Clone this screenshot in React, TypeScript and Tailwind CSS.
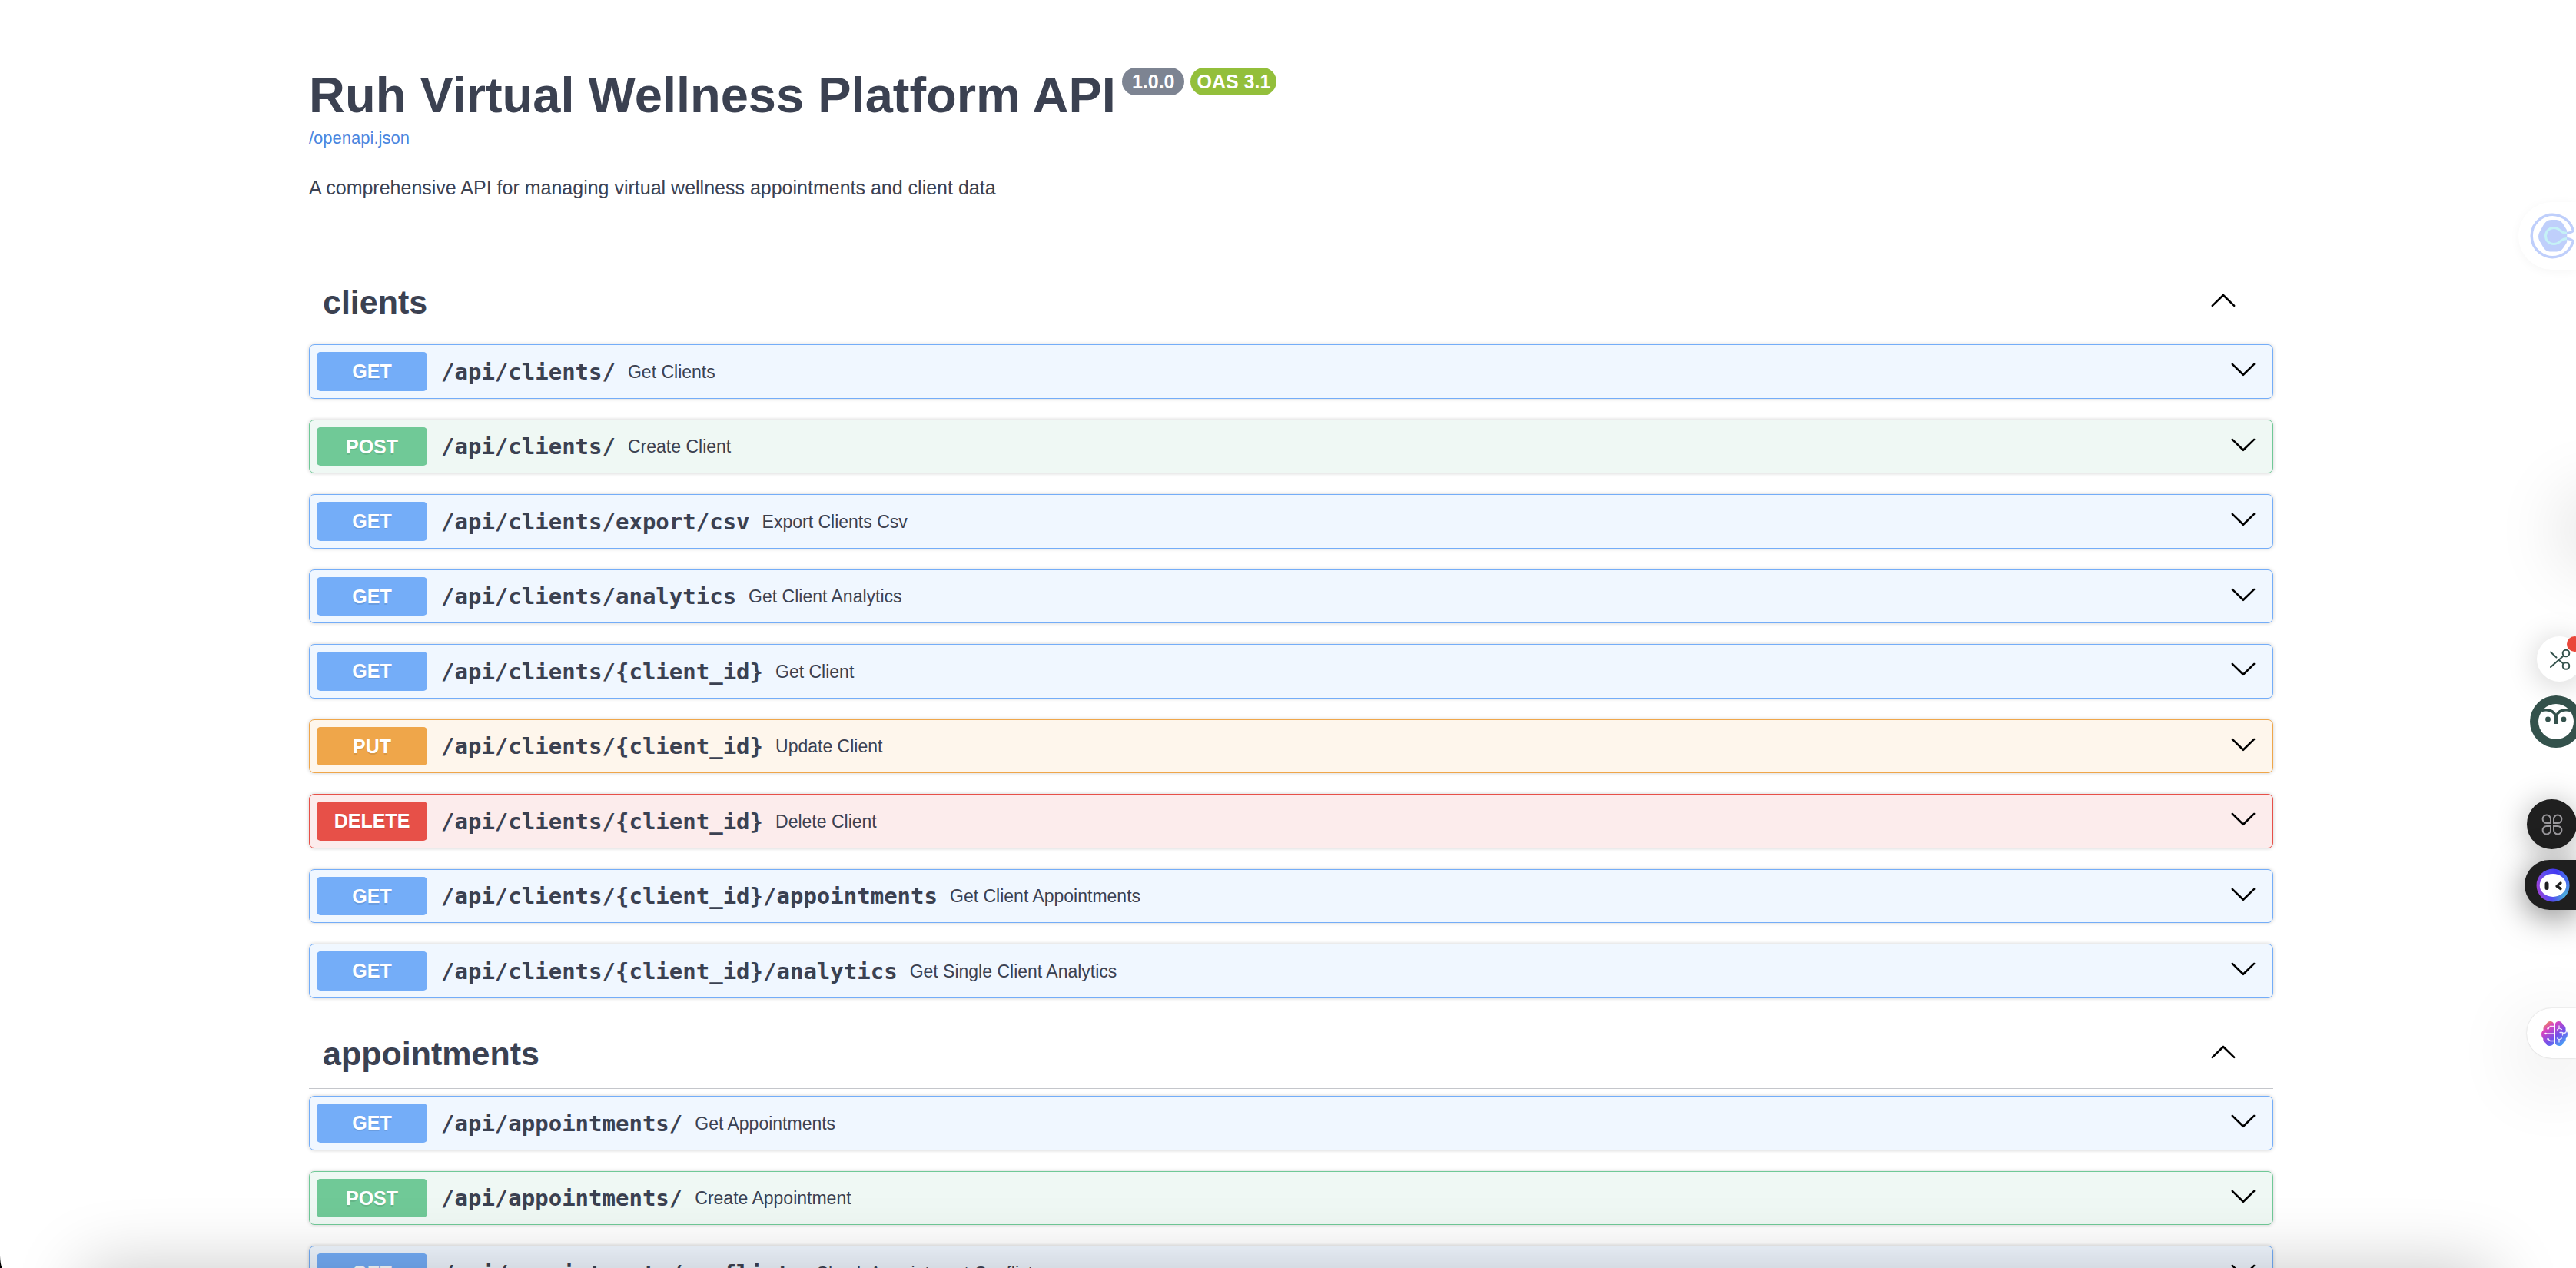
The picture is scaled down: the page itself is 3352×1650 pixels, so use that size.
type Method = "GET" | "POST" | "PUT" | "DELETE";

interface Endpoint {
  method: Method;
  path: string;
  summary: string;
}

const rowStyles: Record<Method, string> = {
  GET: "border-[#74adf8] bg-[#f0f7ff]",
  POST: "border-[#70c997] bg-[#eff8f4]",
  PUT: "border-[#efa64a] bg-[#fef6ec]",
  DELETE: "border-[#e75048] bg-[#fcecec]",
};

const badgeStyles: Record<Method, string> = {
  GET: "bg-[#74adf8]",
  POST: "bg-[#70c997]",
  PUT: "bg-[#efa64a]",
  DELETE: "bg-[#e75048]",
};

const groups: { name: string; endpoints: Endpoint[] }[] = [
  {
    name: "clients",
    endpoints: [
      { method: "GET", path: "/api/clients/", summary: "Get Clients" },
      { method: "POST", path: "/api/clients/", summary: "Create Client" },
      { method: "GET", path: "/api/clients/export/csv", summary: "Export Clients Csv" },
      { method: "GET", path: "/api/clients/analytics", summary: "Get Client Analytics" },
      { method: "GET", path: "/api/clients/{client_id}", summary: "Get Client" },
      { method: "PUT", path: "/api/clients/{client_id}", summary: "Update Client" },
      { method: "DELETE", path: "/api/clients/{client_id}", summary: "Delete Client" },
      { method: "GET", path: "/api/clients/{client_id}/appointments", summary: "Get Client Appointments" },
      { method: "GET", path: "/api/clients/{client_id}/analytics", summary: "Get Single Client Analytics" },
    ],
  },
  {
    name: "appointments",
    endpoints: [
      { method: "GET", path: "/api/appointments/", summary: "Get Appointments" },
      { method: "POST", path: "/api/appointments/", summary: "Create Appointment" },
      { method: "GET", path: "/api/appointments/conflicts", summary: "Check Appointment Conflicts" },
    ],
  },
];

function ArrowUp() {
  return (
    <svg viewBox="0 0 20 20" className="size-9" aria-hidden="true">
      <path d="M 17.418 14.908 C 17.69 15.176 18.127 15.176 18.397 14.908 C 18.667 14.64 18.668 14.207 18.397 13.939 L 10.489 6.109 C 10.219 5.841 9.782 5.841 9.51 6.109 L 1.602 13.939 C 1.332 14.207 1.332 14.64 1.602 14.908 C 1.873 15.176 2.311 15.176 2.581 14.908 L 10 7.767 L 17.418 14.908 Z" />
    </svg>
  );
}

function ArrowDown() {
  return (
    <svg viewBox="0 0 20 20" className="size-9" aria-hidden="true">
      <path d="M17.418 6.109c.272-.268.709-.268.979 0s.271.701 0 .969l-7.908 7.83c-.27.268-.707.268-.979 0l-7.908-7.83c-.27-.268-.271-.701 0-.969s.709-.268.979 0L10 13.25l7.418-7.141z" />
    </svg>
  );
}

function EndpointRow({ method, path, summary }: Endpoint) {
  return (
    <div className={`flex items-center rounded-[7px] border py-[9px] pr-5 pl-[9px] shadow-[0_0_5px_rgba(0,0,0,0.19)] ${rowStyles[method]}`}>
      <button type="button" className="flex flex-1 items-center text-left">
        <span
          className={`w-36 rounded-[5px] pt-[7px] pb-[6px] text-center text-[25px] leading-normal font-bold text-white [text-shadow:0_2px_0_rgba(0,0,0,0.1)] ${badgeStyles[method]}`}
        >
          {method}
        </span>
        <span className="pt-0.5 pr-4 pl-[18px] font-['DejaVu_Sans_Mono',monospace] text-[29px] leading-none font-bold">{path}</span>
        <span className="pt-0.5 text-[23px] leading-none">{summary}</span>
      </button>
      <button type="button" aria-label={`Expand ${method} ${path}`} className="pb-1.5">
        <ArrowDown />
      </button>
    </div>
  );
}

function CalendarIcon() {
  return (
    <svg viewBox="0 0 60 60" className="size-[60px] shrink-0" fill="none" aria-hidden="true">
      <path d="M28 9h5c5 0 8 2 10.500 6l4 6.500c.5 1 .8 2 .8 3.500v11c0 1.500-.3 2.500-.8 3.500l-4 6c-2.500 4-5.500 5-10.500 5h-5c-5 0-8-1.500-10.500-5.500l-5-8.500c-2-3.500-2-8 0-11.500l5-9c2.500-4 5.500-7 10.500-7Z" fill="#bfcffb" />
      <path d="M56 22A27.500 27.500 0 1 0 56 38" stroke="#bfcffb" strokeWidth="3.500" />
      <path d="M49 26.500c-4 0-6-.5-9-3-3-3-5.500-4-9-4-6 0-10.500 4.500-10.500 10.500S25 40.500 31 40.500c3.500 0 6-1 9-4 3-2.500 5-3 9-3" stroke="#c5f1f6" strokeWidth="3" />
      <path d="M48 26.500c3 0 6-1 9.500-4M48 33.500c3 0 6 1 9.500 4" stroke="#bfcffb" strokeWidth="3" />
    </svg>
  );
}

function ScissorsIcon() {
  return (
    <svg viewBox="0 0 30 30" className="size-[30px]" fill="none" stroke="#34524c" strokeWidth="2" strokeLinecap="round" aria-hidden="true">
      <circle cx="23" cy="7" r="4.300" />
      <circle cx="23" cy="23.500" r="4.300" />
      <path d="M3 25 19.500 10.500M3 5.500l7.500 7M14.500 16.500l5 4" />
    </svg>
  );
}

function OwlIcon() {
  return (
    <svg viewBox="0 0 68 68" className="size-[68px]" aria-hidden="true">
      <circle cx="34" cy="34" r="34" fill="#34524c" />
      <circle cx="34" cy="34" r="23" fill="#fff" />
      <path d="M15 19.500c9-2 16 .5 19 7.500 3-7 10-9.500 19-7.500" fill="none" stroke="#34524c" strokeWidth="3.600" />
      <path d="M34 25v12" stroke="#34524c" strokeWidth="4" />
      <circle cx="23.500" cy="31" r="3.400" fill="#34524c" />
      <circle cx="44" cy="31" r="3.400" fill="#34524c" />
    </svg>
  );
}

function CloverIcon() {
  return (
    <svg viewBox="0 0 28 28" className="size-7" fill="none" stroke="#9a989c" strokeWidth="2" aria-hidden="true">
      <path d="M12 12V7a5.200 5.200 0 1 0-5.200 5Z" />
      <path d="M16 12h5.200A5.200 5.200 0 1 0 16 7Z" />
      <path d="M12 16H6.800A5.200 5.200 0 1 0 12 21Z" />
      <path d="M16 16v5a5.200 5.200 0 1 0 5.200-5Z" />
    </svg>
  );
}

function RobotIcon() {
  return (
    <svg viewBox="0 0 44 44" className="size-11 shrink-0" aria-hidden="true">
      <defs>
        <linearGradient id="robot-ring" x1="0" y1="0.700" x2="1" y2="0.500">
          <stop offset="0" stopColor="#a53fd6" />
          <stop offset="0.350" stopColor="#5a4df0" />
          <stop offset="0.700" stopColor="#4338f0" />
          <stop offset="1" stopColor="#4a7cf0" />
        </linearGradient>
        <radialGradient id="robot-glow" cx="0.900" cy="0.850" r="0.450">
          <stop offset="0" stopColor="#4fc0d8" />
          <stop offset="1" stopColor="#4fc0d8" stopOpacity="0" />
        </radialGradient>
      </defs>
      <circle cx="22" cy="22" r="21.500" fill="url(#robot-ring)" />
      <circle cx="22" cy="22" r="21.500" fill="url(#robot-glow)" />
      <ellipse cx="22" cy="22" rx="17.300" ry="15" fill="#fff" />
      <rect x="11.500" y="17.500" width="5" height="10.500" rx="2.500" fill="#1f1f1f" />
      <path d="m32 19-5 4 5 3.500" fill="none" stroke="#1f1f1f" strokeWidth="3.400" strokeLinecap="round" strokeLinejoin="round" />
    </svg>
  );
}

function BrainIcon() {
  return (
    <svg viewBox="0 0 34 32" className="h-8 w-[34px] shrink-0" aria-hidden="true">
      <defs>
        <linearGradient id="brain-fill" x1="0.100" y1="0" x2="0.900" y2="1">
          <stop offset="0" stopColor="#f0a03a" />
          <stop offset="0.250" stopColor="#d943c0" />
          <stop offset="0.600" stopColor="#7350ea" />
          <stop offset="1" stopColor="#3fb4f8" />
        </linearGradient>
      </defs>
      <path
        d="M16 3v26c-1 2-3 3-5.500 3-2.500 0-4.500-1.500-5-4C3 27 2 25 2.300 22.500 .8 21 0 19 0 16.500c0-2 1-4 2.500-5C2 8 3.500 5.500 6 4.500 7 1.500 9 0 11.500 0 13.500 0 15.300 1 16 3ZM18 3v26c1 2 3 3 5.500 3 2.500 0 4.500-1.500 5-4 2.500-1 3.500-3 3.200-5.500C33.200 21 34 19 34 16.500c0-2-1-4-2.500-5C32 8 30.500 5.500 28 4.500 27 1.500 25 0 22.500 0 20.500 0 18.700 1 18 3Z"
        fill="url(#brain-fill)"
      />
      <g fill="none" stroke="#fff" strokeOpacity="0.850" strokeWidth="1.300" strokeLinecap="round">
        <path d="M16 6.500h-4.500L8.500 9.500M16 16H6M16 25.500h-4.500L8.500 23" />
        <path d="M23 6v3l-2.500 2M23 9l3.500 1.500M24 14.500h3l2 1c2 0 3-1 3.500-2.500M27.500 15v3M20.500 22l2.500 2v3M23 24l3.500-2" />
      </g>
      <g fill="#fff">
        <circle cx="8.500" cy="9.500" r="1.200" />
        <circle cx="5.500" cy="16" r="1.300" />
        <circle cx="8.500" cy="23" r="1.200" />
      </g>
    </svg>
  );
}

function FloatingTools() {
  return (
    <aside className="absolute inset-y-0 right-0 flex w-80 flex-col items-end overflow-hidden pt-[263px]">
      <button
        type="button"
        aria-label="Scheduling"
        className="flex h-[88px] w-[75px] shrink-0 items-center rounded-l-[44px] bg-white pl-[15px] shadow-[0_2px_14px_rgba(0,0,0,0.04)]"
      >
        <CalendarIcon />
      </button>
      <div className="mt-[309px] -mr-[60px] size-[60px] shrink-0 rounded-full shadow-[0_0_90px_20px_rgba(0,0,0,0.13)]" />
      <button
        type="button"
        aria-label="Clip"
        className="relative mt-[108px] -mr-2 flex size-[59px] shrink-0 items-center justify-center rounded-full bg-white shadow-[0_4px_40px_rgba(0,0,0,0.2)]"
      >
        <ScissorsIcon />
        <span className="absolute top-0 right-0 size-5 rounded-full bg-[#ea473a]" />
      </button>
      <button type="button" aria-label="Owl assistant" className="mt-[18px] -mr-2 shrink-0">
        <OwlIcon />
      </button>
      <button
        type="button"
        aria-label="Apps"
        className="mt-[67px] -mr-px flex size-[65px] shrink-0 items-center justify-center rounded-full bg-[#1f1f1f] shadow-[0_4px_40px_rgba(0,0,0,0.3)]"
      >
        <CloverIcon />
      </button>
      <button
        type="button"
        aria-label="Chat assistant"
        className="mt-3.5 flex h-[65px] w-[67px] shrink-0 items-center rounded-l-full bg-[#1f1f1f] pl-[15px] shadow-[0_8px_44px_rgba(0,0,0,0.5)]"
      >
        <RobotIcon />
      </button>
      <button
        type="button"
        aria-label="Brain tools"
        className="mt-32 flex h-[65px] w-16 shrink-0 items-center rounded-l-full bg-white pl-[19px] shadow-[0_0_2px_rgba(0,0,0,0.2),0_24px_100px_rgba(0,0,0,0.16)]"
      >
        <BrainIcon />
      </button>
    </aside>
  );
}

export default function App() {
  return (
    <div className="relative h-screen overflow-hidden bg-white pl-2 font-['Liberation_Sans',Arial,sans-serif] text-[#3b4151]">
      <main className="mx-auto max-w-[2556px] pt-[88px]">
        <header>
          <div className="flex items-start gap-2">
            <h1 className="pt-[3px] text-[65px] leading-none font-bold">Ruh Virtual Wellness Platform API</h1>
            <span className="rounded-[18px] bg-[#7d8492] px-[13px] text-[25px] leading-9 font-bold text-white">1.0.0</span>
            <span className="rounded-[18px] bg-[#93bf3b] px-2 text-[25px] leading-9 font-bold text-white">OAS 3.1</span>
          </div>
          <a href="/openapi.json" className="mt-[7px] block w-fit text-[22px] leading-normal text-[#4a86e0]">
            /openapi.json
          </a>
          <p className="mt-[30px] text-[25px] leading-normal">
            A comprehensive API for managing virtual wellness appointments and client data
          </p>
        </header>
        <div className="mt-[84px]">
          {groups.map((group) => (
            <section key={group.name}>
              <div className="mb-[9px] flex items-center justify-between border-b border-[#c4c6cb] py-[13px] pr-[47px] pl-[18px]">
                <h2 className="text-[43px] leading-normal font-bold">{group.name}</h2>
                <button type="button" aria-label={`Collapse ${group.name}`} className="pb-1.5">
                  <ArrowUp />
                </button>
              </div>
              <div className="flex flex-col gap-[27px] pb-[27px]">
                {group.endpoints.map((endpoint) => (
                  <EndpointRow key={endpoint.method + endpoint.path} {...endpoint} />
                ))}
              </div>
            </section>
          ))}
        </div>
      </main>
      <FloatingTools />
      <div className="pointer-events-none absolute inset-x-[110px] top-full h-40 shadow-[0_0_90px_rgba(0,0,0,0.22)]" />
      <svg viewBox="0 0 4 16" className="absolute bottom-0 left-0 h-4 w-1" aria-hidden="true">
        <path d="M0 0C.3 7 1 12 2.500 16H0Z" />
      </svg>
    </div>
  );
}
